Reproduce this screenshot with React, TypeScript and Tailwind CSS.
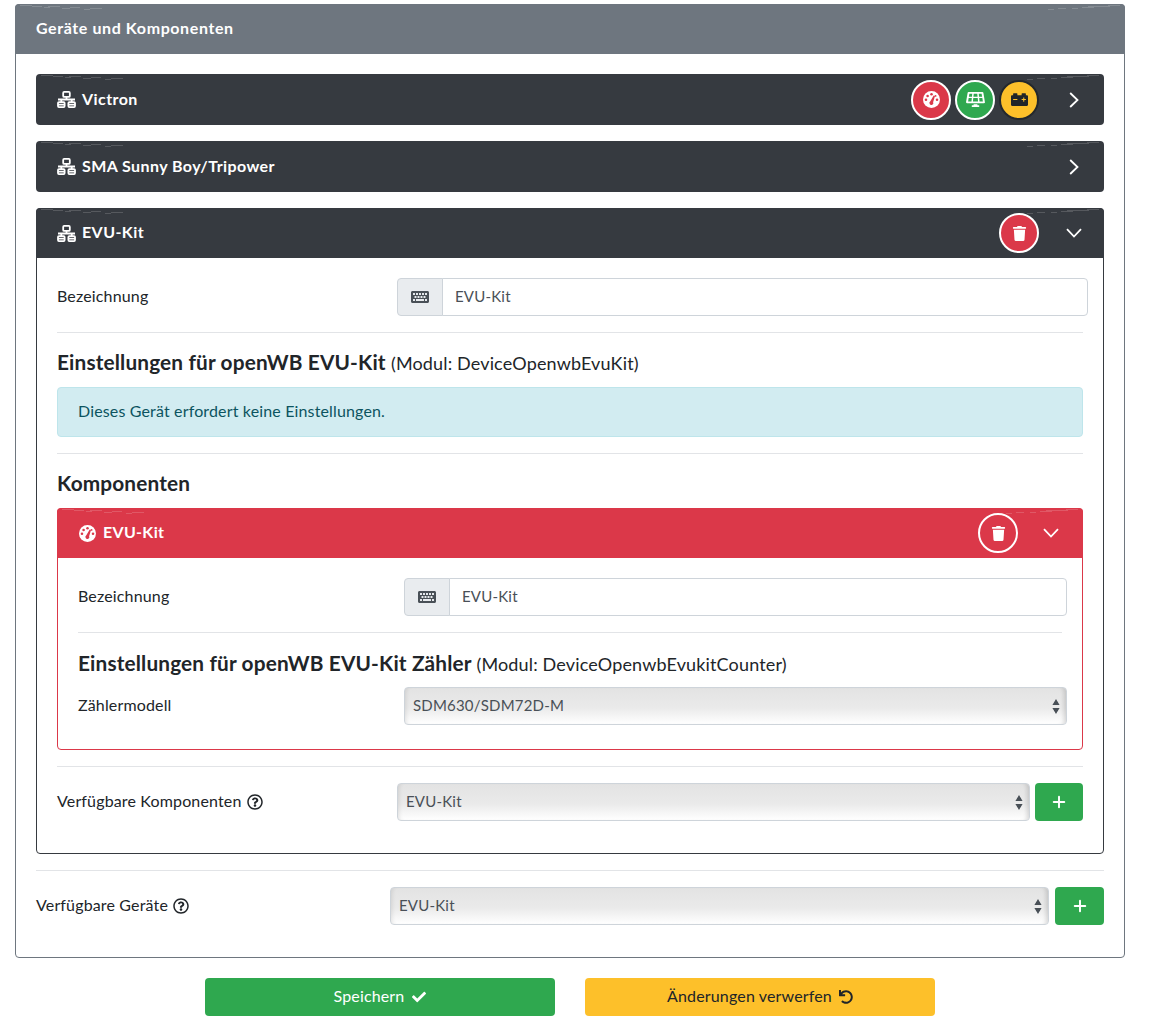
import type { ReactNode } from "react";
import { Plus } from "lucide-react";
import { FaCarBattery, FaCheck, FaKeyboard, FaRegQuestionCircle, FaSolarPanel, FaTrash, FaUndo } from "react-icons/fa";

function DeviceIcon() {
  return (
    <svg viewBox="0 0 20 18" className="h-[17px] w-[19px] shrink-0" fill="none" stroke="currentColor" strokeWidth="1.9">
      <rect x="6.5" y="1" width="7" height="5.2" rx="1" />
      <rect x="1" y="11.8" width="7" height="5.2" rx="1" />
      <rect x="12" y="11.8" width="7" height="5.2" rx="1" />
      <path d="M10 6v3M1 9h18M4.5 9v2.8M15.5 9v2.8M1 14.4h7M12 14.4h7" />
    </svg>
  );
}

function GaugeIcon({ size, dial }: { size: number; dial: string }) {
  return (
    <svg viewBox="0 0 20 20" width={size} height={size} className="shrink-0">
      <circle cx="10" cy="10" r="10" fill="currentColor" />
      <g fill={dial}>
        <circle cx="10" cy="3.8" r="1.5" />
        <circle cx="5.4" cy="5.8" r="1.5" />
        <circle cx="3.5" cy="10.4" r="1.5" />
        <circle cx="16.5" cy="10.4" r="1.5" />
        <circle cx="14.8" cy="5.8" r="1.1" />
        <path d="M12.6 5.4l1.5.5-2.2 7.2a2.3 2.3 0 1 1-3.3-.9z" />
      </g>
    </svg>
  );
}

function ChevronRightThin() {
  return (
    <svg viewBox="0 0 10 16" className="h-[16px] w-[10px]" fill="none" stroke="currentColor" strokeWidth="1.8">
      <path d="M1.2 1l7.3 7-7.3 7" />
    </svg>
  );
}

function ChevronDownThin() {
  return (
    <svg viewBox="0 0 16 10" className="h-[10px] w-[16px]" fill="none" stroke="currentColor" strokeWidth="1.8">
      <path d="M1 1.2l7 7.3 7-7.3" />
    </svg>
  );
}

// thin light dashes along the top corners of the card headers
function Streaks() {
  return (
    <>
      <svg viewBox="0 0 90 5" className="pointer-events-none absolute left-[3px] top-[1px] h-[5px] w-[90px]" stroke="#ffffff" strokeOpacity="0.16" strokeWidth="1">
        <path d="M2 .5h12M14 1.5h10M26 2.5h6M30 1.5h12M44 3.5h8M52 2.5h10M66 4.5h6M72 3.5h12" />
      </svg>
      <svg viewBox="0 0 90 5" className="pointer-events-none absolute right-[3px] top-[1px] h-[5px] w-[90px]" stroke="#ffffff" strokeOpacity="0.16" strokeWidth="1">
        <path d="M88 .5h-12M78 1.5h-22M62 2.5h-12M46 3.5h-6M34 3.5h-8M22 4.5h-6" />
      </svg>
    </>
  );
}

function Circle({ color, children }: { color: string; children: ReactNode }) {
  return <span className={`flex h-10 w-10 items-center justify-center rounded-full border-2 text-white ${color}`}>{children}</span>;
}

function DeviceHeader({ title, open, children }: { title: string; open?: boolean; children?: ReactNode }) {
  return (
    <div className={`relative flex items-center bg-[#363a40] pl-[21px] text-white ${open ? "h-[50px] rounded-t" : "h-[51px] rounded"}`}>
      <Streaks />
      <DeviceIcon />
      <span className="mb-[2px] ml-[6px] font-bold tracking-[0.42px]">{title}</span>
      <div className="ml-auto flex items-center gap-[4px]">
        {children}
        <span className="flex w-[61px] justify-center">{open ? <ChevronDownThin /> : <ChevronRightThin />}</span>
      </div>
    </div>
  );
}

function TextRow({ labelWidth }: { labelWidth: string }) {
  return (
    <div className="-mr-[5px] flex items-center">
      <span className={`mb-[2px] shrink-0 ${labelWidth}`}>Bezeichnung</span>
      <div className="flex h-[38px] flex-1">
        <span className="flex w-[46px] items-center justify-center rounded-l border border-[#ced4da] bg-[#e9ecef] text-[#495057]">
          <FaKeyboard size={18} />
        </span>
        <input readOnly value="EVU-Kit" className="-ml-px min-w-0 flex-1 rounded-r border border-[#ced4da] bg-white px-3 pb-[2px] text-[15px] tracking-[0.2px] text-[#495057] outline-none" />
      </div>
    </div>
  );
}

function SelectBox({ value }: { value: string }) {
  return (
    <div className="relative flex h-[38px] flex-1 items-center overflow-hidden rounded border border-[#ced4da] bg-[linear-gradient(to_bottom,#e3e3e3_0%,#eaeaea_55%,#ffffff_100%)] pb-[2px] pl-2 text-[15px] tracking-[0.2px] text-[#495057] shadow-[inset_4px_0_4px_-3px_rgba(0,0,0,0.1),inset_-5px_0_4px_-3px_rgba(0,0,0,0.14)]">
      {value}
      <svg viewBox="0 0 8 15" className="absolute right-[6px] top-[11px] h-[15px] w-[8px] fill-[#495057]">
        <path d="M4 0l3.6 6H.4zM4 15L.4 9h7.2z" />
      </svg>
    </div>
  );
}

function Hr({ className = "" }: { className?: string }) {
  return <hr className={`border-t border-[#e2e4e7] ${className}`} />;
}

function Help() {
  return <FaRegQuestionCircle size={16} className="ml-[5px] mt-[2px] inline text-[#212529]" />;
}

export default function App() {
  return (
    <div className="min-h-[1026px] w-[1140px] bg-white px-[15px] pt-[4px] font-['Lato',sans-serif] text-base tracking-[0.15px] text-[#212529]">
      <div className="rounded border border-[#6e767f]">
        <div className="relative -mx-px -mt-px flex h-[50px] items-center rounded-t bg-[#6e767f] px-[21px] pb-[2px] font-bold tracking-[0.6px] text-white">
          <Streaks />
          Geräte und Komponenten
        </div>
        <div className="px-5 pb-[32px] pt-5">
          <div className="flex flex-col gap-4">
            <DeviceHeader title="Victron">
              <Circle color="border-white bg-[#db3849]"><GaugeIcon size={17} dial="#db3849" /></Circle>
              <Circle color="border-white bg-[#2fa84f]"><FaSolarPanel size={19} /></Circle>
              <Circle color="border-[#24282c] bg-[#fdc02a] !text-[#212529]"><FaCarBattery size={17} /></Circle>
            </DeviceHeader>
            <DeviceHeader title="SMA Sunny Boy/Tripower" />
            <div className="rounded border border-[#363a40]">
              <div className="-mx-px -mt-px">
                <DeviceHeader title="EVU-Kit" open>
                  <Circle color="border-white bg-[#db3849]"><FaTrash size={15} /></Circle>
                </DeviceHeader>
              </div>
              <div className="px-5 pb-[32px] pt-5">
                <TextRow labelWidth="w-[340px]" />
                <Hr className="mt-4" />
                <h3 className="mt-[15px] h-[28px] text-[20.8px] font-bold leading-[28px]">
                  Einstellungen für openWB EVU-Kit <span className="text-[18px] font-normal">(Modul: DeviceOpenwbEvuKit)</span>
                </h3>
                <div className="mt-[11px] flex h-[50px] items-center rounded border border-[#bee5eb] bg-[#d2ecf1] px-5 pb-[2px] text-[#0c5460]">Dieses Gerät erfordert keine Einstellungen.</div>
                <Hr className="mt-4" />
                <h3 className="mt-[15px] h-[28px] text-[20.8px] font-bold leading-[28px]">Komponenten</h3>
                <div className="mt-[11px] rounded border border-[#db3849]">
                  <div className="relative -mx-px -mt-px flex h-[50px] items-center rounded-t bg-[#db3849] pl-[22px] text-white">
                    <Streaks />
                    <GaugeIcon size={17} dial="#db3849" />
                    <span className="mb-[2px] ml-[7px] font-bold tracking-[0.3px]">EVU-Kit</span>
                    <div className="ml-auto flex items-center">
                      <Circle color="border-white bg-transparent"><FaTrash size={15} /></Circle>
                      <span className="flex w-[65px] justify-center"><ChevronDownThin /></span>
                    </div>
                  </div>
                  <div className="px-5 pb-[24px] pt-5">
                    <TextRow labelWidth="w-[326px]" />
                    <Hr className="mt-4" />
                    <h3 className="mt-[16px] h-[28px] text-[20.8px] font-bold leading-[28px]">
                      Einstellungen für openWB EVU-Kit Zähler <span className="text-[18px] font-normal">(Modul: DeviceOpenwbEvukitCounter)</span>
                    </h3>
                    <div className="-mr-[5px] mt-[10px] flex items-center">
                      <span className="mb-[2px] w-[326px] shrink-0">Zählermodell</span>
                      <SelectBox value="SDM630/SDM72D-M" />
                    </div>
                  </div>
                </div>
                <Hr className="mt-4" />
                <div className="mt-4 flex items-center">
                  <span className="mb-[2px] flex w-[340px] shrink-0 items-center">Verfügbare Komponenten<Help /></span>
                  <SelectBox value="EVU-Kit" />
                  <span className="ml-[5px] flex h-[38px] w-[48px] items-center justify-center rounded bg-[#2fa84f] text-white"><Plus size={18} strokeWidth={2.6} /></span>
                </div>
              </div>
            </div>
          </div>
          <Hr className="mt-4" />
          <div className="mt-4 flex items-center">
            <span className="mb-[2px] flex w-[354px] shrink-0 items-center">Verfügbare Geräte<Help /></span>
            <SelectBox value="EVU-Kit" />
            <span className="ml-[6px] flex h-[38px] w-[49px] items-center justify-center rounded bg-[#2fa84f] text-white"><Plus size={18} strokeWidth={2.6} /></span>
          </div>
        </div>
      </div>
      <div className="mt-5 flex justify-center gap-[30px]">
        <span className="flex h-[38px] w-[350px] items-center justify-center rounded bg-[#2fa84f] pb-[2px] text-white">Speichern<FaCheck size={14} className="ml-[8px] mt-[2px]" /></span>
        <span className="flex h-[38px] w-[350px] items-center justify-center rounded bg-[#fdc02a] pb-[2px] text-[#212529]">Änderungen verwerfen<FaUndo size={14} className="ml-[7px] mt-[2px]" /></span>
      </div>
    </div>
  );
}
